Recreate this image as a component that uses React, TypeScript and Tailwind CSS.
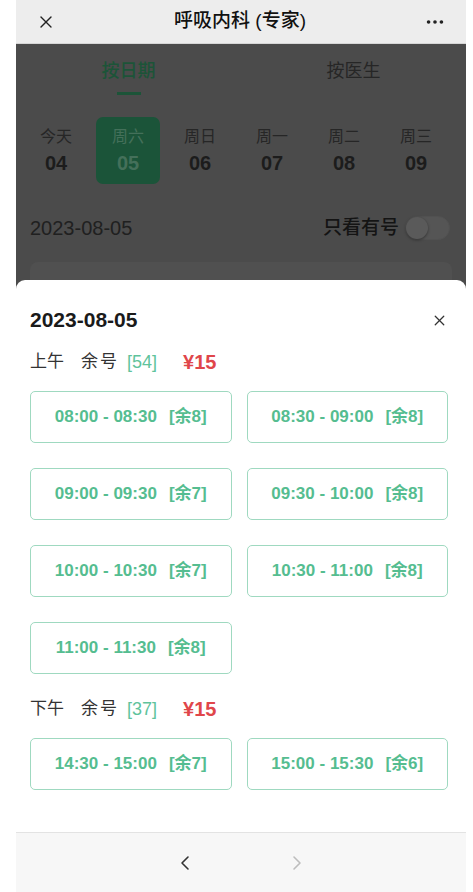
import { X, MoreHorizontal, ChevronLeft, ChevronRight } from "lucide-react";

const days = [
  { w: "今天", d: "04" },
  { w: "周六", d: "05", active: true },
  { w: "周日", d: "06" },
  { w: "周一", d: "07" },
  { w: "周二", d: "08" },
  { w: "周三", d: "09" },
];

const morning = [
  ["08:00 - 08:30", "8"],
  ["08:30 - 09:00", "8"],
  ["09:00 - 09:30", "7"],
  ["09:30 - 10:00", "8"],
  ["10:00 - 10:30", "7"],
  ["10:30 - 11:00", "8"],
  ["11:00 - 11:30", "8"],
];

const afternoon = [
  ["14:30 - 15:00", "7"],
  ["15:00 - 15:30", "6"],
];

function Slot({ time, left }: { time: string; left: string }) {
  return (
    <div className="h-[52px] flex items-center justify-center border border-[#9fd9c0] rounded-[5px] text-[17px] font-bold text-[#55bd90]">
      <span>{time}</span>
      <span className="ml-[12px]">[余{left}]</span>
    </div>
  );
}

function Section({ label, count }: { label: string; count: string }) {
  return (
    <div className="flex items-center h-[24px] text-[17px]">
      <span className="text-[#333]">{label}</span>
      <span className="ml-[17px] text-[#333] tracking-[2px]">余号</span>
      <span className="ml-[8px] text-[18px] text-[#5fc39c]">[{count}]</span>
      <span className="ml-[26px] text-[20px] text-[#e0464a] font-bold">¥15</span>
    </div>
  );
}

export default function App() {
  return (
    <div
      className="w-[473px] h-[892px] bg-white pl-[16px] pr-[7px] overflow-hidden"
      style={{ fontFamily: '"Liberation Sans", "Noto Sans CJK SC", sans-serif' }}
    >
      <div className="h-full flex flex-col bg-[#4b4b4b]">
        {/* top bar */}
        <div className="h-[44px] shrink-0 bg-[#ededed] border-b border-[#d6d6d6] flex items-center px-[20px]">
          <X size={20} strokeWidth={1.6} className="text-[#222]" />
          <div className="flex-1 text-center text-[19px] font-medium text-[#111]">呼吸内科 (专家)</div>
          <MoreHorizontal size={22} strokeWidth={2} className="text-[#222]" />
        </div>

        {/* tabs */}
        <div className="h-[61px] shrink-0 flex">
          <div className="flex-1 flex flex-col items-center pt-[15px]">
            <span className="text-[18px] leading-[24px] text-[#1c5438] font-medium">按日期</span>
            <span className="mt-[9px] w-[24px] h-[3px] bg-[#1c5438]" />
          </div>
          <div className="flex-1 flex flex-col items-center pt-[15px]">
            <span className="text-[18px] leading-[24px] text-[#262626]">按医生</span>
          </div>
        </div>

        {/* days */}
        <div className="flex pl-[4px] pt-[12px]">
          {days.map((d) => (
            <div key={d.d} className="w-[72px] flex justify-center">
              <div
                className={
                  "w-[64px] h-[67px] rounded-[7px] flex flex-col items-center justify-center " +
                  (d.active ? "bg-[#1b5439] text-[#44705a]" : "text-[#1c1c1c]")
                }
              >
                <span className={"text-[16px] leading-[20px] " + (d.active ? "" : "text-[#262626]")}>{d.w}</span>
                <span className="text-[20px] leading-[24px] font-bold mt-[4px]">{d.d}</span>
              </div>
            </div>
          ))}
        </div>

        {/* date & filter */}
        <div className="flex items-center justify-between pl-[14px] pr-[16px] mt-[22px] h-[44px]">
          <span className="text-[20px] text-[#202020]">2023-08-05</span>
          <div className="flex items-center">
            <span className="text-[19px] text-[#141414] font-medium">只看有号</span>
            <div className="ml-[6px] w-[45px] h-[24px] rounded-full bg-[#555] border border-[#515151] relative">
              <div className="absolute left-0 top-0 w-[22px] h-[22px] rounded-full bg-[#5a5a5a] shadow-[0_1px_3px_rgba(0,0,0,0.4)]" />
            </div>
          </div>
        </div>

        <div className="mx-[14px] mt-[12px] h-[30px] rounded-t-[8px] bg-[#505050] shrink-0" />

        {/* sheet */}
        <div className="flex-1 bg-white rounded-t-[9px] -mt-[12px] flex flex-col">
          <div className="flex items-center justify-between pl-[14px] pr-[18px] pt-[22px] h-[58px]">
            <span className="text-[21px] font-bold text-[#1a1a1a]">2023-08-05</span>
            <X size={17} strokeWidth={1.8} className="text-[#333]" />
          </div>
          <div className="pl-[14px] pr-[18px] flex-1">
            <div className="mt-[12px]">
              <Section label="上午" count="54" />
            </div>
            <div className="grid grid-cols-2 gap-x-[15px] gap-y-[25px] mt-[17px]">
              {morning.map(([t, l]) => (
                <Slot key={t} time={t} left={l} />
              ))}
            </div>
            <div className="mt-[23px]">
              <Section label="下午" count="37" />
            </div>
            <div className="grid grid-cols-2 gap-x-[15px] gap-y-[25px] mt-[17px]">
              {afternoon.map(([t, l]) => (
                <Slot key={t} time={t} left={l} />
              ))}
            </div>
          </div>
          <div className="h-[60px] shrink-0 bg-[#f7f7f7] border-t border-[#e3e3e3] flex items-center justify-center gap-[88px]">
            <ChevronLeft size={24} strokeWidth={1.6} className="text-[#333]" />
            <ChevronRight size={24} strokeWidth={1.6} className="text-[#bdbdbd]" />
          </div>
        </div>
      </div>
    </div>
  );
}
